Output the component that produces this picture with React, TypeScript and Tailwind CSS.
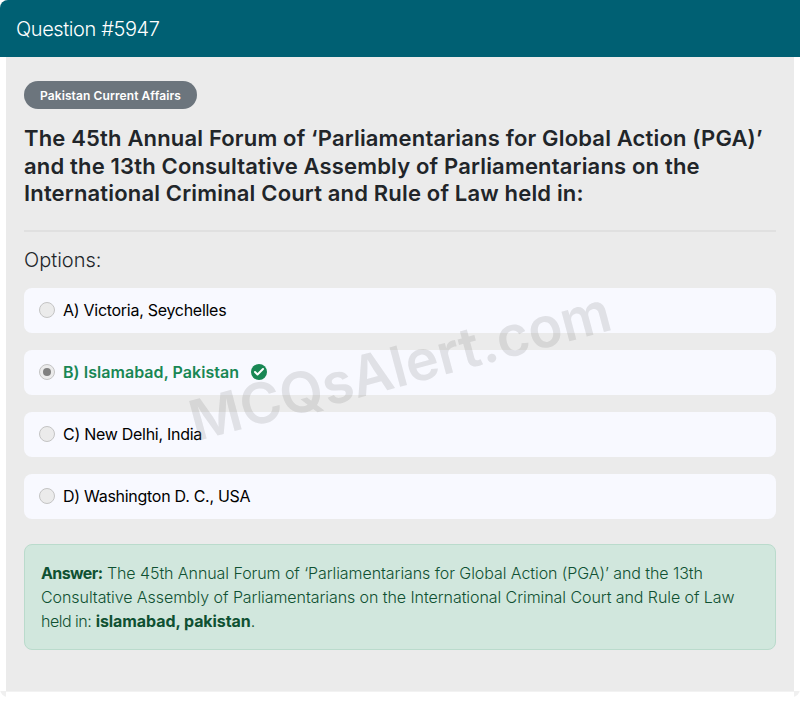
import { Check } from "lucide-react";

const options = [
  { label: "A) Victoria, Seychelles" },
  { label: "B) Islamabad, Pakistan", correct: true },
  { label: "C) New Delhi, India" },
  { label: "D) Washington D. C., USA" },
];

export default function App() {
  return (
    <div className="relative h-[722px] w-[800px] overflow-hidden bg-white font-['Inter','Noto_Sans',sans-serif]">
      <div className="relative h-[697px] rounded-b-lg rounded-tl-lg bg-[#f0f0f0]">
        <div className="flex h-[57px] items-center rounded-tl-lg bg-[#006073] px-4 text-[20px] font-light tracking-[-0.4px] text-white">
          Question #5947
        </div>
        <div className="h-[634px] bg-white px-[6px]">
          <div className="h-full bg-[#ebebeb] px-[18px] pt-6">
            <span className="inline-flex h-7 items-center rounded-full bg-[#6c757d] px-4 pt-px text-[12px] font-semibold tracking-[0.1px] text-white">
              Pakistan Current Affairs
            </span>
            <h1 className="mt-4 text-[22px] leading-[27.5px] font-semibold tracking-[0.17px] text-[#212529]">
              The 45th Annual Forum of ‘Parliamentarians for Global Action (PGA)’ and the 13th Consultative Assembly of Parliamentarians on the International Criminal Court and Rule of Law held in:
            </h1>
            <hr className="mt-[22px] border-t-2 border-[#e0e0e0]" />
            <div className="mt-4 text-[20px] leading-6 font-light text-[#212529]">Options:</div>
            <div className="mt-4 flex flex-col gap-[17px]">
              {options.map((o) => (
                <div key={o.label} className="flex h-[45px] items-center rounded-lg bg-[#f8f9ff] pl-[15px]">
                  <span className="mb-px flex size-4 items-center justify-center rounded-full border border-[#c4c4c4] bg-[#ebebeb]">
                    {o.correct && <span className="size-2 rounded-full bg-[#808080]" />}
                  </span>
                  <span className={o.correct ? "ml-2 text-[16px] font-semibold tracking-[0.05px] text-[#198754]" : "ml-2 text-[16px] font-normal tracking-[-0.28px] text-black"}>
                    {o.label}
                  </span>
                  {o.correct && (
                    <span className="ml-3 flex size-4 items-center justify-center rounded-full bg-[#198754]">
                      <Check className="size-3 text-white" strokeWidth={4} />
                    </span>
                  )}
                </div>
              ))}
            </div>
            <div className="mt-[25px] h-[106px] rounded-lg border border-[#badbcc] bg-[#d1e7dd] p-4 text-[16px] leading-6 font-light tracking-[-0.07px] text-[#0f5132]">
              <b className="font-bold tracking-[-0.6px]">Answer:</b> The 45th Annual Forum of ‘Parliamentarians for Global Action (PGA)’ and the 13th Consultative Assembly of Parliamentarians on the International Criminal Court and Rule of Law <span className="tracking-[-0.5px]">held in:</span> <b className="font-bold">islamabad, pakistan</b>.
            </div>
          </div>
        </div>
        <div className="mx-[6px] h-[6px] border-t border-[#f2f2f2] bg-white" />
      </div>
      <div className="absolute top-[366px] left-[400px] -translate-x-1/2 -translate-y-1/2 -rotate-[15deg] text-[56px] font-semibold whitespace-nowrap text-[rgba(128,128,128,0.2)]">
        MCQsAlert.com
      </div>
    </div>
  );
}
